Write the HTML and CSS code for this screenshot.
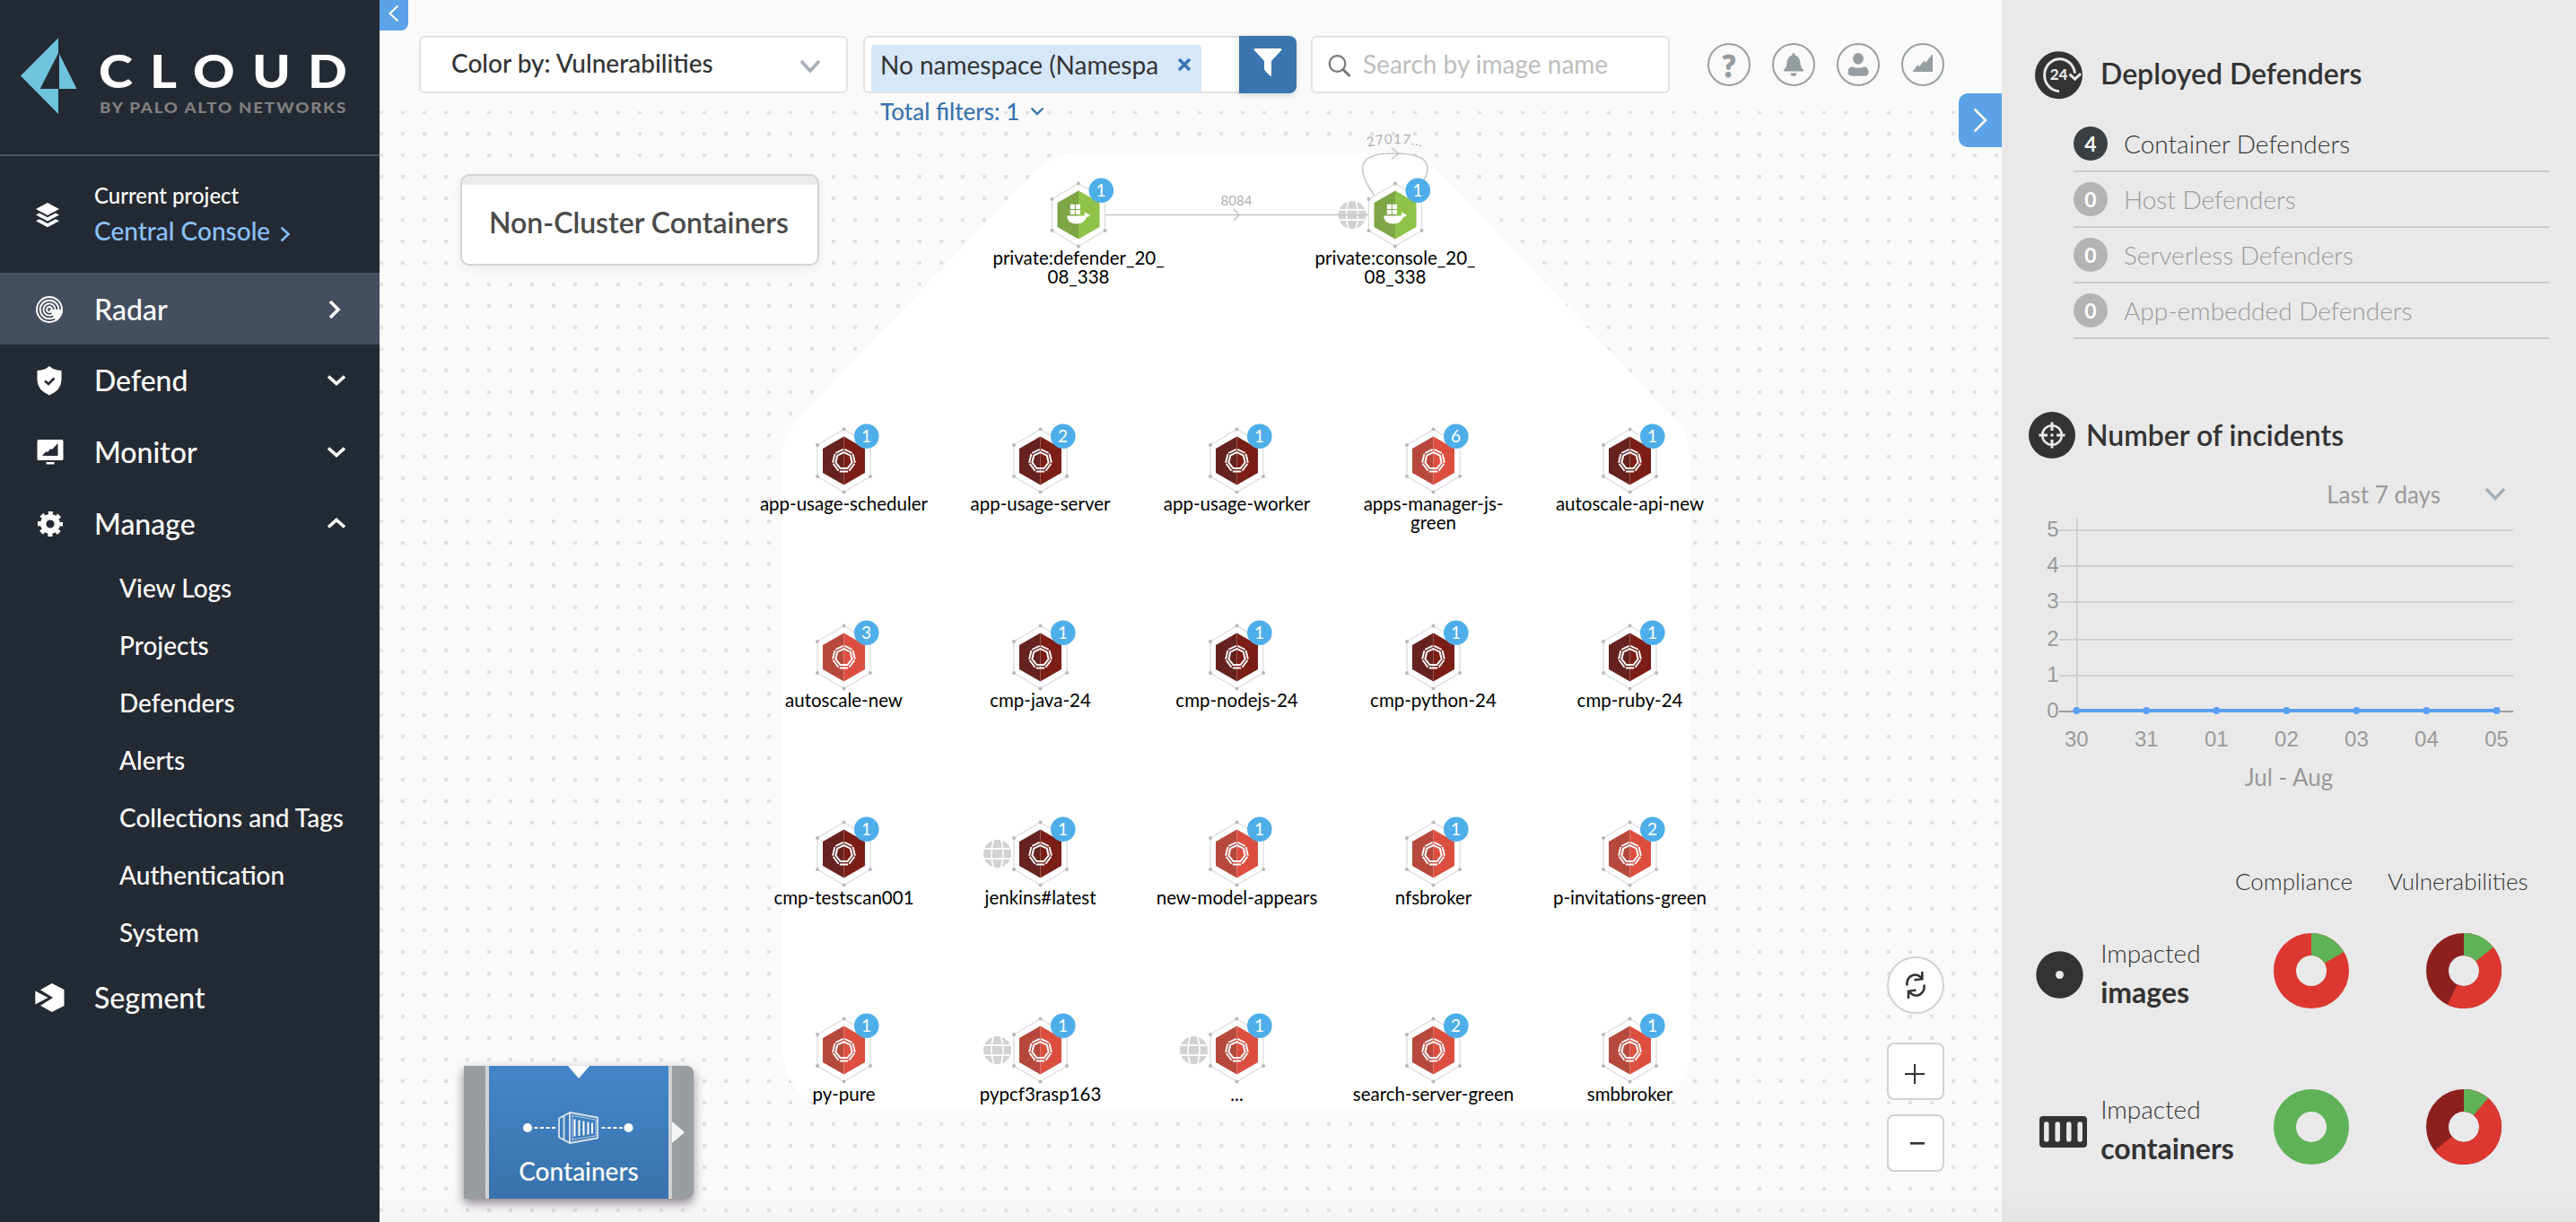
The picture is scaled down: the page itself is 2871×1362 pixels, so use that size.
FILE: index.html
```html
<!DOCTYPE html>
<html lang="en">
<head>
<meta charset="utf-8">
<title>Radar - Containers</title>
<link rel="stylesheet" href="styles.css">
</head>
<body>
<aside class="sidebar">
  <div class="brand">
    <svg class="brand-logo" width="423" height="172" viewBox="0 0 423 172">
      <path fill="#6fc3dc" d="M23 84.6 65 42.3V59.3L44.7 98.9H65V127Z"/>
      <path fill="#6fc3dc" d="M66 60 85.5 98.9H66Z"/>
      <text class="brand-name" x="110" y="98" textLength="296" lengthAdjust="spacingAndGlyphs">CLOUD</text>
      <text class="brand-sub" x="111" y="126" textLength="276" lengthAdjust="spacingAndGlyphs">BY PALO ALTO NETWORKS</text>
    </svg>
  </div>
  <div class="project">
    <svg class="project-icon" width="28" height="30" viewBox="0 0 28 30" fill="#fff">
      <path d="M14 1 27 8 14 15 1 8Z"/>
      <path d="M1 14.5 5 12.5 14 17.2 23 12.5 27 14.5 14 21.5Z"/>
      <path d="M1 21.3 5 19.3 14 24 23 19.3 27 21.3 14 28.3Z"/>
    </svg>
    <div class="project-text">
      <div class="project-label">Current project</div>
      <div class="project-name">Central Console
        <svg width="12" height="18" viewBox="0 0 12 18" fill="none" stroke="#85bcf7" stroke-width="2.6"><path d="M1.5 1.5 9.5 9 1.5 16.5"/></svg>
      </div>
    </div>
  </div>
  <nav class="nav">
    <a class="nav-item active">
      <span class="nav-icon"><svg width="32" height="32" viewBox="-16 -16 32 32" fill="none" stroke="#fff" stroke-width="1.9">
        <circle r="14"/><circle r="10.3"/><circle r="6.6"/><circle r="3"/>
        <path d="M0 0H14.8A15 15 0 0 1 7.5 12.8Z" fill="#fff" stroke="none"/></svg></span>
      <span class="nav-label">Radar</span>
      <svg class="chev-right" width="14" height="22" viewBox="0 0 14 22"><path d="M2 2 11 11 2 20"/></svg>
    </a>
    <a class="nav-item">
      <span class="nav-icon"><svg class="shield" width="28" height="33" viewBox="0 0 28 33"><path fill="#fff" d="M14 0 18 3Q23 5 27.5 5V16Q27 27 14 32.500Q1 27 .5 16V5Q5 5 10 3Z"/><path d="M9 16.500 13 20 19.500 13.500" fill="none" stroke="#242a33" stroke-width="2.600"/></svg></span>
      <span class="nav-label">Defend</span>
      <svg class="chev-down" width="22" height="14" viewBox="0 0 22 14"><path d="M2 2.500 11 10.500 20 2.500"/></svg>
    </a>
    <a class="nav-item">
      <span class="nav-icon"><svg class="icon-monitor" width="30" height="28" viewBox="0 0 30 28"><path fill="#fff" fill-rule="evenodd" d="M2 0H28Q29.500 0 29.500 2V21.500Q29.500 23 28 23H2Q.5 23 .5 21.500V2Q.5 0 2 0ZM6 18H23.500V4L17 11 15.500 10 12 14 10.500 13Z"/><path fill="#fff" d="M10.500 25H19.500V27.500H10.500Z"/></svg></span>
      <span class="nav-label">Monitor</span>
      <svg class="chev-down" width="22" height="14" viewBox="0 0 22 14"><path d="M2 2.500 11 10.500 20 2.500"/></svg>
    </a>
    <a class="nav-item">
      <span class="nav-icon"><svg class="gear" width="30" height="30" viewBox="-15 -15 30 30" fill="none" stroke="#fff"><circle r="7.800" stroke-width="6.400"/><circle r="12" stroke-width="4.200" stroke-dasharray="5 4.425" stroke-dashoffset="2.500"/></svg></span>
      <span class="nav-label">Manage</span>
      <svg class="chev-down" width="22" height="14" viewBox="0 0 22 14"><path d="M2 10.500 11 2.500 20 10.500"/></svg>
    </a>
    <div class="subnav">
      <a>View Logs</a><a>Projects</a><a>Defenders</a><a>Alerts</a><a>Collections and Tags</a><a>Authentication</a><a>System</a>
    </div>
    <a class="nav-item">
      <span class="nav-icon"><svg width="33" height="32" viewBox="0 0 33 32" fill="#fff"><path d="M18.800 0 32.500 7V25L18.800 32 6 24.800 20 16 6 7.200Z"/><path d="M.3 8.500 14.500 16 .3 23.500Z"/></svg></span>
      <span class="nav-label">Segment</span>
    </a>
  </nav>
</aside>

<main class="main">
  <svg class="graph" width="1808" height="1362" viewBox="423 0 1808 1362">
    <defs>
      <g id="frame">
        <path d="M0-35 29.500-17.500V17.500L0 35-29.500 17.500V-17.500Z" fill="#fff" stroke="#dcdcdc" stroke-width="1.300"/>
        <g fill="#b9b9b9"><circle cy="-35" r="2"/><circle cx="29.500" cy="17.500" r="2"/><circle cy="35" r="2"/><circle cx="-29.500" cy="17.500" r="2"/><circle cx="-29.500" cy="-17.500" r="2"/></g>
      </g>
      <g id="twist" fill="none" stroke="#fff">
        <path stroke-width="2" d="M0-9.300 7.300-5.800 9.100 2.100 4 8.600H-4L-9.100 2.100-7.300-5.800Z"/>
        <path stroke-width="1.900" d="M.8-12.600 9.300-8.500M10.100-7.500 12.400 2.200M11.900 3.300 6 11.200M4.700 12H-4.700M-6 11.200-11.900 3.300M-12.400 2.200-10.100-7.500M-9.300-8.500-.8-12.600"/>
      </g>
      <g id="crit"><use href="#frame"/><path fill="#66221f" d="M0-27V27L-23.500 13.500V-13.500Z"/><path fill="#7a1e17" d="M0-27 23.500-13.500V13.500L0 27Z"/><use href="#twist"/></g>
      <g id="high"><use href="#frame"/><path fill="#b7483d" d="M0-27V27L-23.500 13.500V-13.500Z"/><path fill="#dc4f40" d="M0-27 23.500-13.500V13.500L0 27Z"/><use href="#twist"/></g>
      <g id="good"><use href="#frame"/><path fill="#7ea546" d="M0-27V27L-23.500 13.500V-13.500Z"/><path fill="#8fc249" d="M0-27 23.500-13.500V13.500L0 27Z"/>
        <path fill="#fff" d="M-9.200-11.800H-4.200V-6.600H-9.200ZM-3.200-11.800H2V-6.600H-3.200ZM-9.200-5.600H-4.200V-.4H-9.200ZM-3.200-5.600H2V-.4H-3.200ZM-12.800 1H6.500Q7.500 0 6.500-3.200L9.500-1.500 13 .2Q12 2.300 9 2.500 6.500 9.900-2.500 9.900-12.800 9.900-12.800 1Z"/></g>
      <g id="globe"><circle r="15.500" fill="#d2d2d2"/><path fill="none" stroke="#fff" stroke-width="1.600" d="M-15-5.600H15M-15 5.600H15M-4-16Q-9 0-4 16M4-16Q9 0 4 16"/></g>
      <g id="badge"><circle cx="25.300" cy="-27.200" r="13.800" fill="#4eaee9"/></g>
      <pattern id="dots" width="24" height="24" patternUnits="userSpaceOnUse" x="423" y="123"><rect width="4" height="4" fill="#e5e0e2"/></pattern>
      <path id="arc" d="M1510 168Q1555 152 1600 168"/>
    </defs>
    <rect x="423" y="124" width="1808" height="1238" fill="url(#dots)"/>
    <path class="group" d="M1202 239H1555L1816 513V1170H940V513Z"/>

    <g class="edge">
      <path d="M1202 239.500H1555"/>
      <path d="M1375 233 1381 239.500 1375 246"/>
      <path d="M1538 226C1520 204 1515 188 1521 180S1540 171 1555 171 1584 173 1589 181 1590 200 1572 222"/>
      <path d="M1551 164.500 1558.500 171 1551 177.500"/>
    </g>
    <g class="edge-label">
      <text x="1378" y="229">8084</text>
      <text class="arc-label"><textPath href="#arc" startOffset="50%">27017...</textPath></text>
    </g>

    <g transform="translate(1202 239.500)"><use href="#good"/><use href="#badge"/><text class="count" x="25" y="-21">1</text><text class="name" y="55.500">private:defender_20_</text><text class="name" y="76.500">08_338</text></g>
    <g transform="translate(1555 239.500)"><use href="#globe" x="-48"/><path class="edge" d="M-64 0H-24"/><use href="#good"/><use href="#badge"/><text class="count" x="25" y="-21">1</text><text class="name" y="55.500">private:console_20_</text><text class="name" y="76.500">08_338</text></g>

    <g transform="translate(940.500 513.500)"><use href="#crit"/><use href="#badge"/><text class="count" x="25" y="-21">1</text><text class="name" y="55.500">app-usage-scheduler</text></g>
    <g transform="translate(1159.500 513.500)"><use href="#crit"/><use href="#badge"/><text class="count" x="25" y="-21">2</text><text class="name" y="55.500">app-usage-server</text></g>
    <g transform="translate(1378.500 513.500)"><use href="#crit"/><use href="#badge"/><text class="count" x="25" y="-21">1</text><text class="name" y="55.500">app-usage-worker</text></g>
    <g transform="translate(1597.500 513.500)"><use href="#high"/><use href="#badge"/><text class="count" x="25" y="-21">6</text><text class="name" y="55.500">apps-manager-js-</text><text class="name" y="76.500">green</text></g>
    <g transform="translate(1816.500 513.500)"><use href="#crit"/><use href="#badge"/><text class="count" x="25" y="-21">1</text><text class="name" y="55.500">autoscale-api-new</text></g>

    <g transform="translate(940.500 732.500)"><use href="#high"/><use href="#badge"/><text class="count" x="25" y="-21">3</text><text class="name" y="55.500">autoscale-new</text></g>
    <g transform="translate(1159.500 732.500)"><use href="#crit"/><use href="#badge"/><text class="count" x="25" y="-21">1</text><text class="name" y="55.500">cmp-java-24</text></g>
    <g transform="translate(1378.500 732.500)"><use href="#crit"/><use href="#badge"/><text class="count" x="25" y="-21">1</text><text class="name" y="55.500">cmp-nodejs-24</text></g>
    <g transform="translate(1597.500 732.500)"><use href="#crit"/><use href="#badge"/><text class="count" x="25" y="-21">1</text><text class="name" y="55.500">cmp-python-24</text></g>
    <g transform="translate(1816.500 732.500)"><use href="#crit"/><use href="#badge"/><text class="count" x="25" y="-21">1</text><text class="name" y="55.500">cmp-ruby-24</text></g>

    <g transform="translate(940.500 951.500)"><use href="#crit"/><use href="#badge"/><text class="count" x="25" y="-21">1</text><text class="name" y="56">cmp-testscan001</text></g>
    <g transform="translate(1159.500 951.500)"><use href="#globe" x="-48"/><use href="#crit"/><use href="#badge"/><text class="count" x="25" y="-21">1</text><text class="name" y="56">jenkins#latest</text></g>
    <g transform="translate(1378.500 951.500)"><use href="#high"/><use href="#badge"/><text class="count" x="25" y="-21">1</text><text class="name" y="56">new-model-appears</text></g>
    <g transform="translate(1597.500 951.500)"><use href="#high"/><use href="#badge"/><text class="count" x="25" y="-21">1</text><text class="name" y="56">nfsbroker</text></g>
    <g transform="translate(1816.500 951.500)"><use href="#high"/><use href="#badge"/><text class="count" x="25" y="-21">2</text><text class="name" y="56">p-invitations-green</text></g>

    <g transform="translate(940.500 1170.500)"><use href="#high"/><use href="#badge"/><text class="count" x="25" y="-21">1</text><text class="name" y="56">py-pure</text></g>
    <g transform="translate(1159.500 1170.500)"><use href="#globe" x="-48"/><use href="#high"/><use href="#badge"/><text class="count" x="25" y="-21">1</text><text class="name" y="56">pypcf3rasp163</text></g>
    <g transform="translate(1378.500 1170.500)"><use href="#globe" x="-48"/><use href="#high"/><use href="#badge"/><text class="count" x="25" y="-21">1</text><text class="name" y="56">...</text></g>
    <g transform="translate(1597.500 1170.500)"><use href="#high"/><use href="#badge"/><text class="count" x="25" y="-21">2</text><text class="name" y="56">search-server-green</text></g>
    <g transform="translate(1816.500 1170.500)"><use href="#high"/><use href="#badge"/><text class="count" x="25" y="-21">1</text><text class="name" y="56">smbbroker</text></g>
  </svg>

  <button class="collapse-left"><svg width="12" height="20" viewBox="0 0 12 20" fill="none" stroke="#fff" stroke-width="2"><path d="M10.500 1.500 1.500 10 10.500 18.500"/></svg></button>
  <button class="collapse-right"><svg width="18" height="28" viewBox="0 0 18 28" fill="none" stroke="#fff" stroke-width="2.500"><path d="M2.500 1.500 15 14 2.500 26.500"/></svg></button>

  <header class="toolbar">
    <div class="select">
      <span>Color by: Vulnerabilities</span>
      <svg width="24" height="16" viewBox="0 0 24 16" fill="none" stroke="#a6afb7" stroke-width="3.600"><path d="M2 2 12 13 22 2"/></svg>
    </div>
    <div class="filter">
      <div class="filter-row">
        <div class="filter-input"><span class="tag"><span>No namespace (Namespa</span>
          <svg width="16" height="16" viewBox="0 0 16 16" stroke="#3a75ae" stroke-width="3.600"><path d="M2 2 14 14M14 2 2 14"/></svg></span></div>
        <button class="filter-btn"><svg width="32" height="32" viewBox="0 0 32 32" fill="#fff"><path d="M.5 1.500Q.5 0 2 0H30Q31.500 0 31.500 1.500L20 14V30Q20 31.500 18.500 30.500L13 25Q12 24 12 22V14Z"/></svg></button>
      </div>
      <div class="total">Total filters: 1 <svg width="16" height="10" viewBox="0 0 16 10" fill="none" stroke="#3a75ae" stroke-width="2.400"><path d="M1.500 1.500 8 8 14.500 1.500"/></svg></div>
    </div>
    <div class="search">
      <svg width="26" height="26" viewBox="0 0 26 26" fill="none" stroke="#777"><circle cx="10.500" cy="10" r="8.800" stroke-width="2.200"/><path d="M17 16.500 24.500 24" stroke-width="3"/></svg>
      <span>Search by image name</span>
    </div>
    <div class="actions">
      <svg width="48" height="48" viewBox="-24 -24 48 48"><circle r="23"/><text x="0" y="14" class="qmark">?</text></svg>
      <svg width="48" height="48" viewBox="-24 -24 48 48"><circle r="23"/><path d="M0-13Q1.600-13 1.800-10.500 7-8.500 7.500-2 7.800 3.500 11 5.800V7.500H-11V5.800Q-7.800 3.500-7.500-2-7-8.500-1.800-10.500-1.600-13 0-13ZM-3.500 9.500H3.500Q3.200 13 0 13T-3.500 9.500Z"/></svg>
      <svg width="48" height="48" viewBox="-24 -24 48 48"><circle r="23"/><path d="M0-13A5.800 6.300 0 1 1 0-.3 5.800 6.300 0 1 1 0-13ZM-7 2.200Q0 5.500 7 2.200 11.500 3.500 11.500 8 11.500 12.800 7 12.800H-7Q-11.500 12.800-11.500 8-11.500 3.500-7 2.200Z"/></svg>
      <svg width="48" height="48" viewBox="-24 -24 48 48"><circle r="23"/><path d="M11-12V8H-11.500L-5.500 0-4.200 2.500 1.500-4.500 3-2Z"/></svg>
    </div>
  </header>

  <div class="cluster-card">Non-Cluster Containers</div>

  <div class="carousel">
    <div class="side left"></div>
    <div class="tile">
      <svg width="124" height="38" viewBox="0 0 124 38" fill="none" stroke="#fff">
        <circle cx="5" cy="19" r="5" fill="#fff" stroke="none"/><circle cx="117.500" cy="19" r="5" fill="#fff" stroke="none"/>
        <path d="M12.500 19H37M87.500 19H112" stroke-width="2" stroke-dasharray="4 2.500"/>
        <path stroke-width="1.800" opacity=".8" d="M40 8.500 52 2V36L40 29.500ZM52 2 83 7.500V30.500L52 36M45.500 6V32.500"/>
        <path stroke-width="1" opacity=".6" d="M55 5V33M55 5.500 81 10V28L55 32"/>
        <path stroke-width="2" d="M57.500 9.500V28.500M62.500 10.500V28M67.500 11.500V27.500M72.500 12.500V26.500M77 13.500V25.500"/>
      </svg>
      <span>Containers</span>
    </div>
    <div class="side right"></div>
  </div>

  <div class="controls">
    <button class="refresh"><svg width="26" height="32" viewBox="0 0 26 32" fill="none" stroke="#333" stroke-width="2.600"><path d="M3.500 16.500C2.500 9 7.500 4.500 12.500 4.500 16 4.500 18 6 20 9M20.300 1V9.200L11.500 10.200"/><path d="M22.500 15.500C23.500 23 18.500 27.500 13.500 27.500 10 27.500 8 26 6 23M5 31V22.800L13.500 21.500"/></svg></button>
    <button><svg width="64" height="64" viewBox="2 2 64 64" stroke="#333" stroke-width="2"><path d="M22 37H44M33 26V48"/></svg></button>
    <button><svg width="64" height="64" viewBox="2 2 64 64" stroke="#333" stroke-width="2.700"><path d="M28 34.300H44"/></svg></button>
  </div>
</main>

<aside class="panel">
  <h2 class="head head-defenders">
    <svg width="53" height="54" viewBox="-26.500 -26.700 53 54"><circle r="26.500" fill="#333"/><path d="M.5 18A17 18 0 1 1 18 -2" fill="none" stroke="#e9e9e9" stroke-width="2.900"/><path d="M12-1 18 4.500 24.500-1.500" fill="none" stroke="#e9e9e9" stroke-width="3"/><text x="0" y="5.500" class="t24">24</text></svg>
    <span>Deployed Defenders</span>
  </h2>
  <ul class="defenders">
    <li class="on"><b>4</b><span>Container Defenders</span></li>
    <li><b>0</b><span>Host Defenders</span></li>
    <li><b>0</b><span>Serverless Defenders</span></li>
    <li><b>0</b><span>App-embedded Defenders</span></li>
  </ul>
  <h2 class="head head-incidents">
    <svg width="52" height="52" viewBox="-26 -26 52 52"><circle r="26" fill="#333"/><g fill="none" stroke="#e9e9e9"><circle r="10.800" stroke-width="2.600"/><path stroke-width="3" d="M0-14.500V-5M0 14.500V5M-14.500 0H-5M14.500 0H5"/></g><circle r="1.800" fill="#e9e9e9"/></svg>
    <span>Number of incidents</span>
  </h2>
  <div class="range">Last 7 days <svg width="24" height="16" viewBox="0 0 24 16" fill="none" stroke="#a3b0b9" stroke-width="3.400"><path d="M2 2 12 12.500 22 2"/></svg></div>
  <svg class="chart" width="640" height="320" viewBox="2231 570 640 320">
    <path class="grid" d="M2295 591H2801M2295 631H2801M2295 671H2801M2295 713H2801M2295 753H2801M2315 578V793"/>
    <path class="base" d="M2295 793H2801"/>
    <g class="ylab"><text x="2294.500" y="598">5</text><text x="2294.500" y="638">4</text><text x="2294.500" y="678">3</text><text x="2294.500" y="720">2</text><text x="2294.500" y="760">1</text><text x="2294.500" y="800">0</text></g>
    <path class="series" d="M2314.300 792H2782.500"/>
    <g fill="#5b9ff0"><circle cx="2314.300" cy="792" r="4"/><circle cx="2392.300" cy="792" r="4"/><circle cx="2470.300" cy="792" r="4"/><circle cx="2548.400" cy="792" r="4"/><circle cx="2626.400" cy="792" r="4"/><circle cx="2704.400" cy="792" r="4"/><circle cx="2782.500" cy="792" r="4"/></g>
    <g class="xlab"><text x="2314.300" y="832">30</text><text x="2392.300" y="832">31</text><text x="2470.300" y="832">01</text><text x="2548.400" y="832">02</text><text x="2626.400" y="832">03</text><text x="2704.400" y="832">04</text><text x="2782.500" y="832">05</text></g>
    <text class="months" x="2551" y="875.500">Jul - Aug</text>
  </svg>
  <div class="impact">
    <div class="impact-cols"><span class="c1">Compliance</span><span class="c2">Vulnerabilities</span></div>
    <div class="impact-row">
      <span class="ricon"><svg width="53" height="53" viewBox="-26.500 -26.500 53 53"><circle r="26.200" fill="#333"/><circle r="4.500" fill="#e9e9e9"/></svg></span>
      <span class="rlabel">Impacted<b>images</b></span>
      <svg class="donut" width="84" height="84" viewBox="-42 -42 84 84"><circle class="red" r="29.500"/><circle class="green" r="29.500" pathLength="360" stroke-dasharray="60 300"/></svg>
      <svg class="donut" width="84" height="84" viewBox="-42 -42 84 84"><circle class="dark" r="29.500"/><circle class="red" r="29.500" pathLength="360" stroke-dasharray="205.700 154.300"/><circle class="green" r="29.500" pathLength="360" stroke-dasharray="51.400 308.600"/></svg>
    </div>
    <div class="impact-row">
      <span class="ricon box"><svg width="53" height="35" viewBox="0 0 53 35"><rect width="53" height="35" rx="4" fill="#333"/><path stroke="#e9e9e9" stroke-width="5.500" stroke-linecap="round" d="M7.800 9V26M20.200 9V26M32.800 9V26M45.200 9V26"/></svg></span>
      <span class="rlabel">Impacted<b>containers</b></span>
      <svg class="donut" width="84" height="84" viewBox="-42 -42 84 84"><circle class="green" r="29.500"/></svg>
      <svg class="donut" width="84" height="84" viewBox="-42 -42 84 84"><circle class="dark" r="29.500"/><circle class="red" r="29.500" pathLength="360" stroke-dasharray="230.800 129.200"/><circle class="green" r="29.500" pathLength="360" stroke-dasharray="40 320"/></svg>
    </div>
  </div>
</aside>
</body>
</html>
```
FILE: styles.css
```css
* { box-sizing: border-box; }
body { margin: 0; display: flex; width: 2871px; height: 1362px; overflow: hidden; font-family: Lato, "Open Sans", sans-serif; color: #333; background: #fafafa; }
button { padding: 0; border: 0; font: inherit; display: flex; align-items: center; justify-content: center; }
svg { display: block; flex: none; }

/* sidebar */
.sidebar { width: 423px; flex: none; background: #242a33; color: #fff; }
.brand { height: 174px; border-bottom: 2px solid #4b5462; }
.brand-name { font: 900 51px Lato, sans-serif; fill: #fff; letter-spacing: 17px; }
.brand-sub { font: 900 16px Lato, sans-serif; fill: #808080; letter-spacing: 1.5px; }
.project { height: 132px; border-bottom: 2px solid #4b5462; display: flex; padding: 28px 0 0 39px; }
.project-icon { margin-top: 23px; }
.project-text { margin-left: 38px; }
.project-label { font-size: 24px; line-height: 32px; font-weight: 500; }
.project-name { font-size: 28px; line-height: 40px; font-weight: 500; margin-top: 3px; color: #8cc1fa; display: flex; align-items: center; gap: 11px; }
.project-name svg { margin-top: 7px; }
.nav-item { height: 80px; display: flex; align-items: center; padding-right: 37px; }
.nav-item.active { height: 78px; background: #434e5e; }
.nav-icon { width: 66px; margin-left: 39px; }
.shield, .gear, .icon-monitor { margin-left: 2px; }
.nav-label { flex: 1; margin-top: -2px; font-size: 32px; font-weight: 500; }
.nav-item > svg { fill: none; stroke: #fff; stroke-width: 3.6; }
.chev-right { margin-right: 6px; }
.subnav a { display: flex; align-items: center; height: 64px; padding: 0 0 2px 133px; font-size: 28px; font-weight: 500; }

/* graph canvas */
.main { position: relative; width: 1808px; flex: none; background: linear-gradient(#fafafa 1325px, #f5f5f5); }
.graph { position: absolute; left: 0; top: 0; }
.group { fill: #fff; stroke: #fff; stroke-width: 136; stroke-linejoin: round; }
.edge { fill: none; stroke: #c6c6c6; stroke-width: 1.6; }
.edge-label text { font-size: 15px; fill: #b0b0b0; text-anchor: middle; }
.edge-label .arc-label { letter-spacing: 1px; }
.count { font-size: 19px; fill: #fff; text-anchor: middle; }
.name { font-size: 20.5px; fill: #000; text-anchor: middle; }

.collapse-left { position: absolute; left: 0; top: 0; width: 32px; height: 34px; padding-bottom: 5px; background: #5ca2e6; border-radius: 0 0 8px 0; }
.collapse-right { position: absolute; right: 0; top: 104px; width: 48px; height: 60px; background: #5ca2e6; border-radius: 10px 0 0 10px; }

/* toolbar */
.toolbar { position: relative; display: flex; align-items: flex-start; height: 124px; width: 1760px; padding: 40px 0 0 44px; font-size: 28px; }
.select { width: 478px; height: 64px; border: 2px solid #e2e2e2; border-radius: 6px; background: #fff; display: flex; align-items: center; justify-content: space-between; padding: 0 28px 4px 34px; font-weight: 500; }
.select svg { margin-top: 8px; }
.filter { width: 483px; margin-left: 17px; }
.filter-row { display: flex; }
.filter-input { width: 419px; height: 64px; border: 2px solid #e2e2e2; border-right: 0; border-radius: 6px 0 0 6px; background: #fff; padding: 8px 0 0 7px; }
.tag { display: flex; justify-content: space-between; align-items: center; width: 368px; height: 52px; padding: 0 11px 9px 10px; background: #d6e7fa; border-radius: 4px 4px 0 0; }
.filter-btn { width: 64px; height: 64px; background: #3a75ae; border-radius: 0 8px 8px 0; box-shadow: 0 2px 6px rgba(0,0,0,.15); padding-bottom: 4px; }
.total { display: flex; align-items: center; gap: 12px; margin: 3px 0 0 19px; font-size: 26px; line-height: 34px; font-weight: 500; color: #3a75ae; }
.search { width: 400px; height: 64px; margin-left: 16px; border: 2px solid #e2e2e2; border-radius: 6px; background: #fff; display: flex; align-items: center; gap: 13px; padding: 0 0 2px 17px; color: #bdbdbd; }
.search svg { margin-top: 5px; }
.actions { display: flex; gap: 24px; margin: 8px 0 0 42px; }
.actions circle { fill: none; stroke: #98a0a4; stroke-width: 2; }
.actions path, .qmark { fill: #969da1; }
.qmark { font: 900 34px Lato, sans-serif; text-anchor: middle; stroke: #969da1; stroke-width: 1; }

.cluster-card { position: absolute; left: 90px; top: 194px; width: 400px; height: 102px; border: 2px solid #d3d3d3; border-radius: 10px; background: linear-gradient(#ebebeb 10px, #fff 10px); box-shadow: 0 3px 12px rgba(0,0,0,.06); font-size: 32px; font-weight: 600; color: #4a4a4a; display: flex; align-items: center; justify-content: center; padding: 5px 2px 0 0; }

/* view switcher */
.carousel { position: absolute; left: 94px; top: 1188px; width: 256px; height: 148px; display: flex; gap: 4px; background: rgba(205,205,208,.9); border-radius: 0 8px 8px 0; box-shadow: 0 5px 12px rgba(50,35,55,.55); }
.side { width: 24px; background: #989da0; }
.side.right { border-radius: 0 8px 8px 0; }
.side.right::before { content: ""; display: block; margin-top: 62px; width: 14px; height: 24px; background: #f5f5f5; clip-path: polygon(0 0, 100% 50%, 0 100%); }
.tile { width: 200px; background: linear-gradient(#4386c8, #3972ab); color: #fff; font-size: 28px; font-weight: 500; display: flex; flex-direction: column; align-items: center; }
.tile::before { content: ""; width: 24px; height: 14px; background: #fff; clip-path: polygon(0 0, 100% 0, 50% 100%); }
.tile svg { margin-top: 36px; }
.tile span { margin-top: 11px; line-height: 36px; }

.controls { position: absolute; left: 1680px; top: 1066px; display: flex; flex-direction: column; gap: 16px; }
.controls button { width: 64px; height: 64px; border: 2px solid #d2d2d2; border-radius: 8px; background: #fff; }
.controls .refresh { border-radius: 50%; margin-bottom: 16px; }

/* right panel */
.panel { width: 640px; flex: none; background: linear-gradient(#e9e9e9 1325px, #e4e4e4); display: flex; flex-direction: column; }
.head { margin: 0; display: flex; align-items: center; font-size: 32px; font-weight: 600; }
.head-defenders { height: 54px; margin-top: 57px; padding-left: 37px; gap: 20px; }
.head-defenders span { margin-top: -5px; }
.head-incidents { height: 52px; margin-top: 80.5px; padding-left: 30px; gap: 12px; }
.t24 { font: 900 17px Lato, sans-serif; fill: #e9e9e9; text-anchor: middle; }
.defenders { list-style: none; margin: 19px 0 0 80px; padding: 0; width: 530px; }
.defenders li { height: 62px; border-bottom: 2px solid #c9c9c9; display: flex; align-items: center; gap: 18px; font-size: 28px; font-weight: 300; color: #9b9b9b; }
.defenders li span { margin-top: -1px; }
.defenders li.on { color: #333; }
.defenders b { width: 38px; height: 38px; border-radius: 50%; background: #b3b3b3; color: #fff; font-size: 23px; font-weight: 700; display: flex; align-items: center; justify-content: center; }
.defenders .on b { background: #393f43; }
.range { display: flex; justify-content: flex-end; align-items: center; gap: 49px; height: 36px; margin-top: 22px; padding-right: 78px; font-size: 26px; color: #999; }
.chart { margin-top: 1.5px; }
.grid { fill: none; stroke: #000; stroke-opacity: .1; stroke-width: 2; }
.base { stroke: #9c9c9c; stroke-width: 2; }
.series { stroke: #5b9ff0; stroke-width: 4; }
.ylab, .xlab { font-family: "Liberation Sans", Arial, sans-serif; font-size: 24px; fill: #999; }
.ylab { text-anchor: end; }
.xlab { text-anchor: middle; }
.months { font-size: 26px; fill: #999; text-anchor: middle; }
.impact { margin-top: 75px; }
.impact-cols { display: flex; height: 30px; font-size: 26px; line-height: 34px; font-weight: 300; }
.c1 { margin-left: 260px; width: 170px; }
.impact-row { height: 174px; display: flex; align-items: center; }
.ricon { width: 111px; padding-left: 37.5px; padding-top: 8px; }
.ricon.box { padding-left: 42px; padding-top: 10px; }
.rlabel { width: 192px; font-size: 28px; line-height: 43px; font-weight: 300; padding-top: 4px; }
.rlabel b { display: block; font-size: 32px; font-weight: 700; }
.donut { margin: 0 83px 0 3px; transform: rotate(-90deg); }
.donut circle { fill: none; stroke-width: 25; }
.red { stroke: #dc3831; }
.green { stroke: #5fb258; }
.dark { stroke: #8c201f; }
```
